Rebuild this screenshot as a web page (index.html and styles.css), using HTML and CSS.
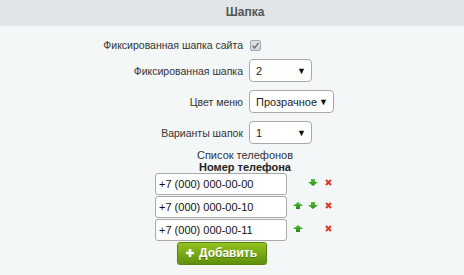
FILE: index.html
```html
<!DOCTYPE html>
<html lang="ru">
<head>
    <meta charset="UTF-8">
    <meta name="viewport" content="width=device-width, initial-scale=1.0">
    <title>Шапка</title>
    <link rel="stylesheet" href="styles.css">
</head>
<body>
<div class="panel">
    <div class="panel-title">Шапка</div>

    <div class="options">
        <div class="label">Фиксированная шапка сайта</div>
        <div class="control">
            <span class="checkbox">
                <svg width="9" height="9" viewBox="0 0 9 9"><path d="M1.5 4.8 L3.6 6.9 L7.6 1.8" fill="none" stroke="#6f7579" stroke-width="1.4"/></svg>
            </span>
        </div>

        <div class="label">Фиксированная шапка</div>
        <div class="control">
            <div class="select w-small"><span>2</span><span class="arrow">▼</span></div>
        </div>

        <div class="label">Цвет меню</div>
        <div class="control">
            <div class="select w-wide"><span>Прозрачное</span><span class="arrow">▼</span></div>
        </div>

        <div class="label">Варианты шапок</div>
        <div class="control">
            <div class="select w-small"><span>1</span><span class="arrow">▼</span></div>
        </div>
    </div>

    <div class="phones">
        <div class="phones-caption">Список телефонов</div>
        <div class="phones-head">Номер телефона</div>

        <div class="phone-row">
            <input class="phone-input" type="text" value="+7 (000) 000-00-00">
            <div class="tools">
                <span class="slot up"></span>
                <span class="slot down">
                    <svg width="10" height="7" viewBox="0 0 10 7"><path d="M3 0 H7 V3 H10 L5 7 L0 3 H3 Z" fill="url(#g)"/></svg>
                </span>
                <span class="slot del">
                    <svg width="7" height="7" viewBox="0 0 7 7"><path d="M1 1 L6 6 M6 1 L1 6" stroke="#dc3a22" stroke-width="2"/></svg>
                </span>
            </div>
        </div>

        <div class="phone-row">
            <input class="phone-input" type="text" value="+7 (000) 000-00-10">
            <div class="tools">
                <span class="slot up">
                    <svg width="10" height="7" viewBox="0 0 10 7"><path d="M3 7 H7 V4 H10 L5 0 L0 4 H3 Z" fill="url(#g)"/></svg>
                </span>
                <span class="slot down">
                    <svg width="10" height="7" viewBox="0 0 10 7"><path d="M3 0 H7 V3 H10 L5 7 L0 3 H3 Z" fill="url(#g)"/></svg>
                </span>
                <span class="slot del">
                    <svg width="7" height="7" viewBox="0 0 7 7"><path d="M1 1 L6 6 M6 1 L1 6" stroke="#dc3a22" stroke-width="2"/></svg>
                </span>
            </div>
        </div>

        <div class="phone-row">
            <input class="phone-input" type="text" value="+7 (000) 000-00-11">
            <div class="tools">
                <span class="slot up">
                    <svg width="10" height="7" viewBox="0 0 10 7"><path d="M3 7 H7 V4 H10 L5 0 L0 4 H3 Z" fill="url(#g)"/></svg>
                </span>
                <span class="slot down"></span>
                <span class="slot del">
                    <svg width="7" height="7" viewBox="0 0 7 7"><path d="M1 1 L6 6 M6 1 L1 6" stroke="#dc3a22" stroke-width="2"/></svg>
                </span>
            </div>
        </div>

        <div class="add-wrap">
            <button class="btn-add">
                <svg width="8" height="8" viewBox="0 0 8 8"><path d="M4 0 V8 M0 4 H8" stroke="#fff" stroke-width="2.6"/></svg>
                Добавить
            </button>
        </div>
    </div>
</div>

<svg width="0" height="0" class="defs">
    <defs>
        <linearGradient id="g" x1="0" y1="0" x2="0" y2="1">
            <stop offset="0" stop-color="#5cc23a"/>
            <stop offset="1" stop-color="#228a16"/>
        </linearGradient>
    </defs>
</svg>
</body>
</html>
```

FILE: styles.css
```css
body {
    margin: 0;
    background-color: #f3f7f8;
    font-family: "Liberation Sans", Arial, sans-serif;
    font-size: 11px;
    color: #333;
}

.defs {
    display: block;
    height: 0;
}

.panel-title {
    height: 26px;
    line-height: 25px;
    background-color: #e0e6e8;
    text-align: center;
    font-weight: bold;
    font-size: 12px;
    color: #555;
    padding-left: 26px;
}

.options {
    display: grid;
    grid-template-columns: 243px auto;
    column-gap: 6px;
    row-gap: 8px;
    padding-top: 13px;
    align-items: center;
}

.label {
    text-align: right;
    line-height: 12px;
    font-size: 10.5px;
}

.control {
    display: flex;
    align-items: center;
}

.checkbox {
    width: 11px;
    height: 11px;
    margin-left: 1px;
    border: 1px solid #a3a8ab;
    border-radius: 2px;
    background: linear-gradient(#e2e5e7, #cfd3d6);
    display: flex;
    align-items: center;
    justify-content: center;
    box-sizing: border-box;
}

.checkbox svg {
    display: block;
}

.select {
    height: 23px;
    box-sizing: border-box;
    border: 1px solid #a9a9a9;
    border-radius: 4px;
    background-color: #fff;
    display: flex;
    align-items: center;
    justify-content: space-between;
    padding: 0 5px 0 6px;
    color: #222;
    font-size: 11px;
}

.select .arrow {
    font-size: 9px;
    color: #111;
}

.w-small {
    width: 63px;
}

.w-wide {
    width: 85px;
}

.phones {
    margin-left: 155px;
    width: 177px;
    padding-top: 5px;
}

.phones-caption,
.phones-head {
    text-align: center;
    line-height: 12px;
    padding-left: 3px;
}

.phones-head {
    font-weight: bold;
    color: #222;
}

.phone-row {
    display: flex;
    align-items: center;
    margin-bottom: 1px;
}

.phone-input {
    width: 132px;
    height: 22px;
    box-sizing: border-box;
    margin: 0;
    border: 1px solid #a9a9a9;
    border-radius: 3px;
    padding: 0 3px;
    font-family: "Liberation Sans", Arial, sans-serif;
    font-size: 11px;
    color: #111;
    background-color: #fff;
}

.tools {
    display: flex;
    align-items: center;
    margin-left: 6px;
    margin-bottom: 4px;
}

.slot {
    display: flex;
    height: 7px;
}

.slot.up {
    width: 15px;
}

.slot.down {
    width: 17px;
}

.slot.del {
    width: 7px;
}

.add-wrap {
    width: 132px;
    display: flex;
    justify-content: center;
}

.btn-add {
    width: 90px;
    height: 23px;
    margin-left: 1px;
    border: 1px solid #5b860c;
    border-radius: 3px;
    background: linear-gradient(#93c21f, #5f900c);
    box-shadow: 0 1px 1px rgba(0, 0, 0, 0.25);
    color: #fff;
    font-family: "Liberation Sans", Arial, sans-serif;
    font-size: 12px;
    font-weight: bold;
    text-shadow: 0 1px 0 rgba(0, 0, 0, 0.3);
    display: flex;
    align-items: center;
    justify-content: center;
    gap: 5px;
    padding: 0 0 1px 0;
    cursor: pointer;
}
```
